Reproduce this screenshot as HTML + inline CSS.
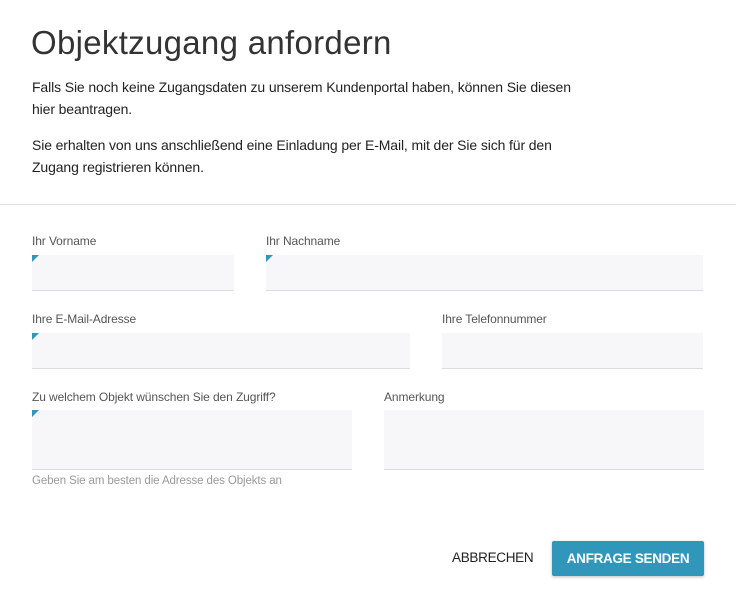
<!DOCTYPE html>
<html><head><style>
*{margin:0;padding:0;box-sizing:border-box}
body{width:736px;height:600px;background:#fff;font-family:"Liberation Sans",sans-serif;position:relative;overflow:hidden;color:#222}
.a{position:absolute}
h1{position:absolute;left:31px;top:24px;font-size:33px;font-weight:300;color:#333;letter-spacing:0.3px}
p{position:absolute;left:32px;font-size:14px;line-height:22px;color:#222;letter-spacing:-0.12px}
.hr{position:absolute;left:0;top:204px;width:736px;height:1px;background:#ddd}
.l{position:absolute;font-size:12px;color:#555;letter-spacing:-0.1px}
.i{position:absolute;background:#f7f7f9;border-bottom:1px solid #dcdce0}
.t::before{content:"";position:absolute;left:0;top:0;border-top:7px solid #2f97bd;border-right:7px solid transparent}
</style></head><body>
<h1>Objektzugang anfordern</h1>
<p style="top:76px">Falls Sie noch keine Zugangsdaten zu unserem Kundenportal haben, können Sie diesen<br>hier beantragen.</p>
<p style="top:134px">Sie erhalten von uns anschließend eine Einladung per E-Mail, mit der Sie sich für den<br>Zugang registrieren können.</p>
<div class="hr"></div>
<div class="l" style="left:32px;top:234px">Ihr Vorname</div>
<div class="l" style="left:266px;top:234px">Ihr Nachname</div>
<div class="i t" style="left:32px;top:255px;width:202px;height:36px"></div>
<div class="i t" style="left:266px;top:255px;width:437px;height:36px"></div>
<div class="l" style="left:32px;top:312px">Ihre E-Mail-Adresse</div>
<div class="l" style="left:442px;top:312px">Ihre Telefonnummer</div>
<div class="i t" style="left:32px;top:333px;width:378px;height:36px"></div>
<div class="i" style="left:442px;top:333px;width:261px;height:36px"></div>
<div class="l" style="left:32px;top:390px">Zu welchem Objekt wünschen Sie den Zugriff?</div>
<div class="l" style="left:384px;top:390px">Anmerkung</div>
<div class="i t" style="left:32px;top:410px;width:320px;height:60px"></div>
<div class="i" style="left:384px;top:410px;width:320px;height:60px"></div>
<div class="l" style="left:32px;top:475px;color:#999;font-size:11.5px">Geben Sie am besten die Adresse des Objekts an</div>
<div class="a" style="left:452px;top:550px;font-size:13.5px;color:#222;letter-spacing:-0.3px">ABBRECHEN</div>
<div class="a" style="left:552px;top:541px;width:152px;height:35px;background:#3097bb;border-radius:2px;box-shadow:0 1px 3px rgba(0,0,0,.25);color:#fff;font-weight:bold;font-size:13.5px;line-height:35px;text-align:center;letter-spacing:-0.3px">ANFRAGE SENDEN</div>
</body></html>
